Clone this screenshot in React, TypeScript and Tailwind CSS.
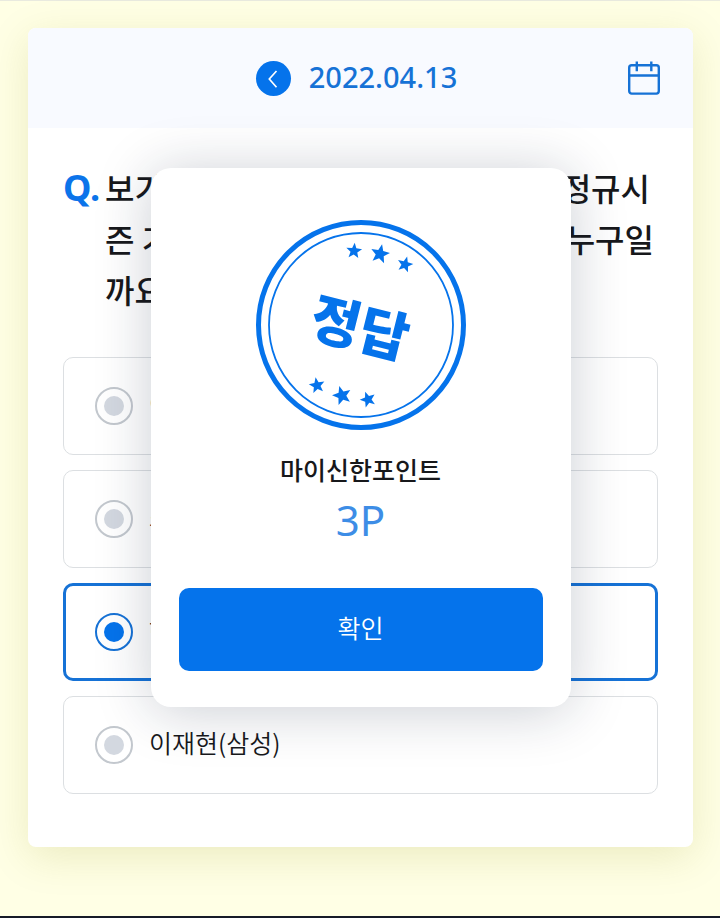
import type { ReactNode } from 'react'

const options = [
  { id: 'option-1', name: '이' },
  { id: 'option-2', name: '소' },
  { id: 'option-3', name: '하' },
  { id: 'option-4', name: '이재현(삼성)' },
]

const stars = [
  { x: 98, y: 31, r: 8.3, tilt: 5 },
  { x: 124, y: 34, r: 10, tilt: 12 },
  { x: 149, y: 44.500, r: 8.3, tilt: 15 },
  { x: 61, y: 165.500, r: 8.3, tilt: -10 },
  { x: 86, y: 175.500, r: 10, tilt: -16 },
  { x: 112, y: 179.500, r: 8.3, tilt: -20 },
]

function starPoints(x: number, y: number, r: number, tilt: number) {
  return Array.from({ length: 10 }, (_, i) => {
    const radius = i % 2 === 0 ? r : r * 0.43
    const angle = ((i * 36 + tilt - 90) * Math.PI) / 180
    return `${(x + radius * Math.cos(angle)).toFixed(2)},${(y + radius * Math.sin(angle)).toFixed(2)}`
  }).join(' ')
}

function Stamp() {
  return (
    <div className="relative flex size-[210px] items-center justify-center text-[#0573eb]">
      <svg viewBox="0 0 210 210" className="absolute inset-0" fill="none" aria-hidden="true">
        <circle cx="105" cy="105" r="102.5" stroke="currentColor" strokeWidth="5" />
        <circle cx="105" cy="105" r="92" stroke="currentColor" strokeWidth="1.8" />
        {stars.map((s) => (
          <polygon key={s.x} points={starPoints(s.x, s.y, s.r, s.tilt)} fill="currentColor" />
        ))}
      </svg>
      <strong className="rotate-[14deg] text-[54px] leading-none font-black">정답</strong>
    </div>
  )
}

function Header() {
  return (
    <header className="grid h-[100px] grid-cols-[1fr_auto_1fr] items-center rounded-t-lg bg-[#f8faff] px-8">
      <span />
      <div className="flex items-center gap-[18px] pr-2">
        <button type="button" aria-label="이전" className="flex size-[35px] items-center justify-center rounded-full bg-[#0573eb]">
          <svg width="35" height="35" viewBox="0 0 35 35" fill="none" stroke="white" strokeWidth="1.7" aria-hidden="true">
            <path d="M20.5 10 L13.3 18 L20.5 26.3" />
          </svg>
        </button>
        <time dateTime="2022-04-13" className="pb-0.5 font-['Noto_Sans','Noto_Sans_CJK_KR',sans-serif] text-[29px] leading-9 font-medium text-[#1672d6]">
          2022.04.13
        </time>
      </div>
      <button type="button" aria-label="달력" className="justify-self-end text-[#1672d6]">
        <svg width="34" height="35" viewBox="0 0 34 35" fill="none" stroke="currentColor" strokeWidth="2.4" aria-hidden="true">
          <rect x="2.200" y="4.300" width="29.600" height="28.300" rx="2.500" />
          <path d="M2.200 14.500 H31.800 M9.800 0.500 V10.200 M24.300 0.500 V10.200" />
        </svg>
      </button>
    </header>
  )
}

function Line({ children }: { children: ReactNode }) {
  return <span className="flex justify-between">{children}</span>
}

function Question() {
  return (
    <h1 className="flex text-[32px] leading-[51px] font-medium text-[#17181b]">
      <span className="w-[42px] shrink-0 font-['Noto_Sans',sans-serif] text-[36px] font-bold text-[#0b74ea]">Q.</span>
      <span className="flex-1">
        <Line>
          <span>보기</span>
          <span className="pr-2">정규시</span>
        </Line>
        <Line>
          <span>즌 기</span>
          <span className="pr-1">누구일</span>
        </Line>
        <Line>
          <span>까요</span>
        </Line>
      </span>
    </h1>
  )
}

function ResultDialog() {
  return (
    <div className="absolute inset-0 flex items-center justify-center">
      <section
        role="dialog"
        aria-label="정답"
        className="flex w-[420px] flex-col items-center rounded-[20px] bg-white px-7 pt-[52px] pb-9 shadow-[0_4px_56px_rgba(20,30,60,0.22)]"
      >
        <Stamp />
        <p className="mt-[19px] text-[25px] leading-10 font-medium text-[#17181b]">마이신한포인트</p>
        <p className="mt-1 font-['Noto_Sans','Noto_Sans_CJK_KR',sans-serif] text-[42px] leading-[54px] text-[#3d8de6]">3P</p>
        <button type="button" className="mt-[41px] h-[83px] w-full rounded-[10px] bg-[#0573eb] pb-1 text-[25px] font-[350] text-white">
          확인
        </button>
      </section>
    </div>
  )
}

export default function App() {
  return (
    <div className="min-h-screen border-t border-b-2 border-t-[#e9eadf] border-b-[#171b28] bg-[#ffffe5] pt-[27px] pr-[27px] pl-7 font-['Noto_Sans_CJK_KR',sans-serif]">
      <main className="relative rounded-lg bg-white shadow-[0_10px_40px_rgba(130,130,0,0.16)]">
        <Header />
        <form className="px-[35px] pt-[34px] pb-[53px]">
          <Question />
          <div className="mt-[42px] flex flex-col gap-[15px]">
            {options.map((option) => (
              <label
                key={option.id}
                htmlFor={option.id}
                className="flex h-[98px] items-center gap-4 rounded-[10px] border border-[#dcdfe2] px-[31px] text-[25px] font-[350] text-[#17181b] has-checked:border-3 has-checked:border-[#1672d6] has-checked:px-[29px]"
              >
                <input
                  id={option.id}
                  type="radio"
                  name="answer"
                  defaultChecked={option.id === 'option-3'}
                  className="size-[38px] shrink-0 appearance-none rounded-full border-2 border-[#c3c8ce] bg-[#d3d8e0] bg-clip-content p-[7px] checked:border-[#1672d6] checked:bg-[#0573eb]"
                />
                <span className="pb-1">{option.name}</span>
              </label>
            ))}
          </div>
        </form>
        <ResultDialog />
      </main>
    </div>
  )
}
